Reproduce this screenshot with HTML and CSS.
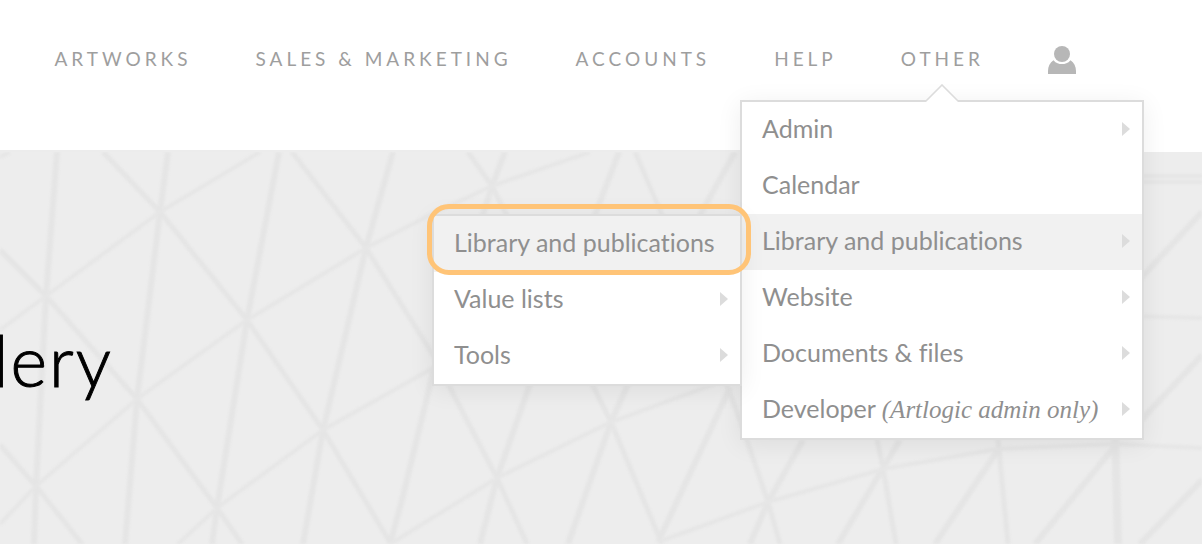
FILE: index.html
```html
<!DOCTYPE html>
<html lang="en">
<head>
    <meta charset="UTF-8">
    <meta name="viewport" content="width=device-width, initial-scale=1.0">
    <title>Gallery</title>
    <link rel="stylesheet" href="styles.css">
</head>
<body>
    <header class="header">
        <nav class="nav">
            <ul class="nav-list">
                <li><a href="#">Artworks</a></li>
                <li><a href="#">Sales &amp; Marketing</a></li>
                <li><a href="#">Accounts</a></li>
                <li><a href="#">Help</a></li>
                <li class="nav-open">
                    <a href="#">Other</a>
                    <div class="menu menu-main">
                        <svg class="menu-pointer" width="34" height="18" viewBox="0 0 34 18">
                            <path d="M1 17 L17 1 L33 17 V18 H1 Z" fill="#fff"/>
                            <path d="M0 17 H1 L17 1 L33 17 H34" fill="none" stroke="#dcdcdc" stroke-width="1.6"/>
                        </svg>
                        <ul>
                            <li class="has-sub"><a href="#">Admin</a></li>
                            <li><a href="#">Calendar</a></li>
                            <li class="has-sub active">
                                <a href="#">Library and publications</a>
                                <ul class="menu menu-sub">
                                    <li class="active highlight"><a href="#">Library and publications</a></li>
                                    <li class="has-sub"><a href="#">Value lists</a></li>
                                    <li class="has-sub"><a href="#">Tools</a></li>
                                </ul>
                            </li>
                            <li class="has-sub"><a href="#">Website</a></li>
                            <li class="has-sub"><a href="#">Documents &amp; files</a></li>
                            <li class="has-sub"><a href="#">Developer <em>(Artlogic admin only)</em></a></li>
                        </ul>
                    </div>
                </li>
                <li>
                    <a class="account" href="#" aria-label="Account">
                        <svg width="28" height="28" viewBox="0 0 28 28" fill="#b7b7b7">
                            <circle cx="14" cy="8" r="8"/>
                            <path d="M5.5 14.2 C8 17.4 11 18 14 18 C17 18 20 17.4 22.5 14.2 C26 16.5 28 20.5 28 25 V28 H0 V25 C0 20.5 2 16.5 5.5 14.2 Z"/>
                        </svg>
                    </a>
                </li>
            </ul>
        </nav>
    </header>

    <main class="hero">
        <svg class="hero-pattern" viewBox="0 152 1202 392" preserveAspectRatio="xMidYMin slice" aria-hidden="true">
            <g fill="none" stroke="#e5e5e5" stroke-width="6">
                <path d="M57 152 L46 296 L36 486 L34 544"/>
                <path d="M168 152 L160 212 L137 399 L125 544"/>
                <path d="M279 152 L247 320 L217 508 L212 544"/>
                <path d="M393 152 L366 248 L323 430 L303 544"/>
                <path d="M505 152 L492 186 L433 373 L402 500 L390 544"/>
                <path d="M619 152 L595 215 L530 384 L497 478 L480 544"/>
                <path d="M735 152 L700 215 L628 384 L611 422 L568 544"/>
                <path d="M730 388 L658 542"/>
                <path d="M803 440 L768 502 L750 544"/>
                <path d="M900 440 L883 468 L838 544"/>
                <path d="M998 450 L935 544"/>
                <path d="M1115 446 L1035 544"/>
                <path d="M1202 480 L1140 544"/>
                <path d="M1202 355 L1130 432"/>
                <path d="M1202 212 L1130 290"/>
            </g>
            <g fill="none" stroke="#e5e5e5" stroke-width="5">
                <path d="M0 250 L46 296 L137 399 L217 508 L242 544"/>
                <path d="M0 445 L36 486 L82 544"/>
                <path d="M103 152 L160 212 L247 320 L323 430 L391 544"/>
                <path d="M292 152 L366 248 L433 355 L497 478 L527 544"/>
                <path d="M468 152 L492 186 L592 384 L611 422 L662 544"/>
                <path d="M635 152 L662 215 L740 420 L768 502 L780 544"/>
                <path d="M875 430 L883 468 L896 544"/>
                <path d="M997 430 L1000 460 L1008 544"/>
                <path d="M1115 430 L1118 544" stroke-width="8"/>
            </g>
            <g fill="none" stroke="#e6e6e6" stroke-width="4">
                <path d="M0 157 L10 152"/>
                <path d="M0 330 L46 296 L160 212 L260 152"/>
                <path d="M0 524 L36 486 L137 399 L247 320 L366 248 L430 215 L492 186 L590 152"/>
                <path d="M178 544 L217 508 L323 430 L433 368"/>
                <path d="M390 544 L497 478 L611 422 L742 374"/>
                <path d="M658 542 L768 502 L883 469 L998 449 L1115 444 L1202 448"/>
                <path d="M1130 316 L1202 318"/>
                <path d="M1130 176 H1202 M1130 182 H1202"/>
            </g>
        </svg>
        <h1 class="hero-title">lery</h1>
    </main>
</body>
</html>
```

FILE: styles.css
```css
* {
    box-sizing: border-box;
}
body {
    margin: 0;
    min-height: 100vh;
    display: flex;
    flex-direction: column;
    font-family: Lato, "Liberation Sans", sans-serif;
    font-variant-ligatures: none;
    color: #8f8f8f;
    background: #fff;
}
ul {
    list-style: none;
    margin: 0;
    padding: 0;
}
a {
    color: inherit;
    text-decoration: none;
}

/* Header */
.header {
    position: relative;
    z-index: 1;
    background: #fff;
}
.header::after {
    content: "";
    display: block;
    height: 2px;
    margin-right: 60px;
    background: #ececec;
}
.nav {
    height: 150px;
    padding: 44px 126px 0 0;
}
.nav-list {
    display: flex;
    justify-content: flex-end;
    gap: 64px;
}
.nav-list > li > a {
    display: block;
    font-size: 19px;
    line-height: 30px;
    letter-spacing: 4px;
    text-transform: uppercase;
    white-space: nowrap;
    color: #9e9e9e;
}
.nav-open {
    position: relative;
}
.nav-list > li > .account {
    display: flex;
    align-items: center;
    height: 32px;
    letter-spacing: 0;
}

/* Dropdown menus */
.menu {
    position: absolute;
    border: 2px solid #dcdcdc;
    background: #fff;
    box-shadow: 0 4px 24px rgba(0, 0, 0, 0.07);
}
.menu-main {
    top: 56px;
    right: -160px;
    width: 404px;
}
.menu-sub {
    top: 0;
    right: 100%;
    width: 310px;
}
.menu-pointer {
    position: absolute;
    top: -18px;
    left: 183px;
}
.menu li {
    position: relative;
}
.menu a {
    display: block;
    height: 56px;
    padding: 0 20px;
    font-size: 25px;
    line-height: 52px;
    white-space: nowrap;
}
.menu .active > a {
    background: #f1f1f1;
}
.menu .has-sub > a::after {
    content: "";
    position: absolute;
    top: 20px;
    right: 12px;
    border: 7px solid transparent;
    border-left: 8px solid #dcdcdc;
    border-right: 0;
}
.menu em {
    font-family: "Liberation Serif", serif;
    font-size: 25px;
}
.highlight::after {
    content: "";
    position: absolute;
    inset: -12px -11px -3px -7px;
    border: 5px solid #ffc477;
    border-radius: 22px;
}

/* Hero */
.hero {
    position: relative;
    flex: 1;
    overflow: hidden;
    background: #ededed;
}
.hero-pattern {
    position: absolute;
    inset: 0;
    width: 100%;
    height: 100%;
    filter: blur(1px);
}
.hero-title {
    position: relative;
    margin: 166px 0 0 -7px;
    font-size: 70px;
    font-weight: 300;
    line-height: 84px;
    letter-spacing: 2px;
    color: #000;
    -webkit-text-stroke: 1px #000;
}
```
